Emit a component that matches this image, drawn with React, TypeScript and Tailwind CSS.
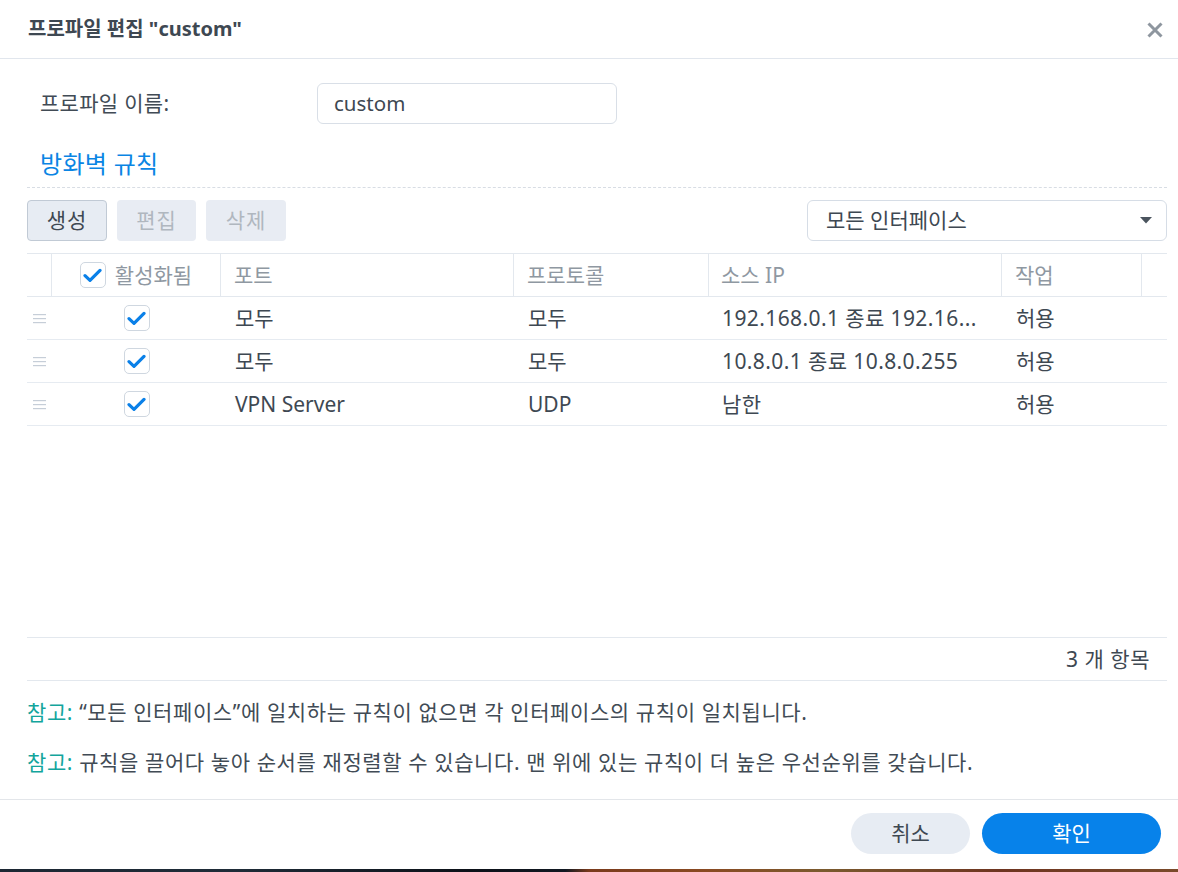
import React from "react";

const font = { fontFamily: '"Noto Sans", "Noto Sans CJK KR", sans-serif' };

function Check() {
  return (
    <div className="w-[26px] h-[26px] rounded-[5px] border border-[#cfd7e0] bg-white flex items-center justify-center shrink-0">
      <svg width="19" height="15" viewBox="0 0 19 15" fill="none">
        <path d="M2 7.6 L7 12.4 L17 2.4" stroke="#0a80e8" strokeWidth="3.2" strokeLinecap="round" strokeLinejoin="round" />
      </svg>
    </div>
  );
}

function Handle() {
  return (
    <svg width="13" height="11" viewBox="0 0 13 11">
      <rect x="0" y="1" width="13" height="1.2" fill="#c6ced8" />
      <rect x="0" y="5" width="13" height="1.2" fill="#c6ced8" />
      <rect x="0" y="9" width="13" height="1.2" fill="#c6ced8" />
    </svg>
  );
}

const rows = [
  { port: "모두", proto: "모두", ip: "192.168.0.1 종료 192.16...", act: "허용" },
  { port: "모두", proto: "모두", ip: "10.8.0.1 종료 10.8.0.255", act: "허용" },
  { port: "VPN Server", proto: "UDP", ip: "남한", act: "허용" },
];

export default function App() {
  return (
    <div className="w-[1178px] h-[872px] flex flex-col bg-white text-[#414b55] overflow-hidden" style={font}>
      <div className="flex-1 flex flex-col min-h-0">
        {/* Header */}
        <div className="h-[59px] shrink-0 border-b border-[#e1e6ed] flex items-center justify-between pl-[28px] pr-[15px]">
          <div className="text-[20px] leading-none font-bold text-[#3e4852]">프로파일 편집 "custom"</div>
          <svg width="16" height="16" viewBox="0 0 16 16" className="mt-[1px]">
            <path d="M1.5 1.5 L14.5 14.5 M14.5 1.5 L1.5 14.5" stroke="#8e969f" strokeWidth="3" strokeLinecap="butt" />
          </svg>
        </div>

        {/* Body */}
        <div className="flex-1 flex flex-col pl-[27px] pr-[11px]">
          <div className="flex items-center mt-[24px] h-[41px]">
            <div className="w-[290px] pl-[13px] text-[21px] leading-none tracking-[0.3px]">프로파일 이름:</div>
            <div className="w-[300px] h-[41px] border border-[#d9dfe7] rounded-[6px] flex items-center px-[16px] text-[20.5px] leading-none text-[#3e4852]">
              custom
            </div>
          </div>

          <div className="mt-[20px] h-[44px] border-b border-dashed border-[#d8dde4] pl-[13px] flex items-start">
            <div className="text-[24px] text-[#0a85e4] leading-[40px] tracking-[0.3px]">방화벽 규칙</div>
          </div>

          <div className="mt-[12px] flex items-center justify-between h-[41px]">
            <div className="flex gap-[10px]">
              <div className="w-[80px] h-[41px] rounded-[4px] border border-[#c1cad5] bg-[#e7ecf3] flex items-center justify-center text-[21px] leading-none tracking-[1px] text-[#3e4852]">생성</div>
              <div className="w-[79px] h-[41px] rounded-[4px] bg-[#e8ecf3] flex items-center justify-center text-[21px] leading-none tracking-[1px] text-[#b0b7bf]">편집</div>
              <div className="w-[80px] h-[41px] rounded-[4px] bg-[#e8ecf3] flex items-center justify-center text-[21px] leading-none tracking-[1px] text-[#b0b7bf]">삭제</div>
            </div>
            <div className="w-[360px] h-[41px] border border-[#d6dde6] rounded-[6px] flex items-center justify-between pl-[18px] pr-[14px] text-[21px] leading-none text-[#3e4852]">
              <span>모든 인터페이스</span>
              <svg width="12" height="7" viewBox="0 0 12 7">
                <path d="M0 0 L12 0 L6 6.5 Z" fill="#4a545e" />
              </svg>
            </div>
          </div>

          {/* Table */}
          <div className="mt-[12px] flex-1 flex flex-col">
            <div className="h-[44px] border-t border-b border-[#e3e8ee] flex text-[21px] leading-none text-[#8f98a2]">
              <div className="w-[25px] border-r border-[#e3e8ee]" />
              <div className="w-[169px] border-r border-[#e3e8ee] flex items-center justify-center gap-[9px]">
                <Check />
                <span>활성화됨</span>
              </div>
              <div className="w-[293px] border-r border-[#e3e8ee] flex items-center pl-[13px]">포트</div>
              <div className="w-[195px] border-r border-[#e3e8ee] flex items-center pl-[13px]">프로토콜</div>
              <div className="w-[293px] border-r border-[#e3e8ee] flex items-center pl-[12px]">소스 IP</div>
              <div className="w-[140px] border-r border-[#e3e8ee] flex items-center pl-[13px]">작업</div>
              <div className="flex-1" />
            </div>
            {rows.map((r, i) => (
              <div key={i} className="h-[43px] border-b border-[#e6ebf1] flex text-[21px] leading-none text-[#3e4852]">
                <div className="w-[25px] flex items-center pl-[6px]">
                  <Handle />
                </div>
                <div className="w-[169px] flex items-center justify-center">
                  <Check />
                </div>
                <div className="w-[293px] flex items-center pl-[14px]">{r.port}</div>
                <div className="w-[195px] flex items-center pl-[14px]">{r.proto}</div>
                <div className="w-[293px] flex items-center pl-[13px] whitespace-nowrap overflow-hidden tracking-[0.4px]">{r.ip}</div>
                <div className="w-[140px] flex items-center pl-[14px]">{r.act}</div>
                <div className="flex-1" />
              </div>
            ))}
            <div className="flex-1" />
            <div className="h-[44px] border-t border-b border-[#e3e8ee] flex items-center justify-end pr-[17px] text-[21px] leading-none tracking-[0.5px] text-[#3e4852]">
              3 개 항목
            </div>
          </div>

          <div className="pt-[18px] pb-[24px] flex flex-col gap-[24px] text-[21px] tracking-[0.6px] text-[#414b55]">
            <div className="leading-[26px] whitespace-nowrap">
              <span className="text-[#13a59c]">참고:</span> “모든 인터페이스”에 일치하는 규칙이 없으면 각 인터페이스의 규칙이 일치됩니다.
            </div>
            <div className="leading-[26px] whitespace-nowrap">
              <span className="text-[#13a59c]">참고:</span> 규칙을 끌어다 놓아 순서를 재정렬할 수 있습니다. 맨 위에 있는 규칙이 더 높은 우선순위를 갖습니다.
            </div>
          </div>
        </div>

        {/* Footer */}
        <div className="h-[70px] shrink-0 border-t border-[#e3e6ea] flex items-start justify-end pt-[13px] pr-[17px] gap-[12px]">
          <div className="w-[119px] h-[41px] rounded-full bg-[#e7ecf3] flex items-center justify-center text-[21px] leading-none text-[#3e4852]">취소</div>
          <div className="w-[179px] h-[41px] rounded-full bg-[#0782ea] flex items-center justify-center text-[21px] leading-none text-white">확인</div>
        </div>
      </div>
      <div className="h-[3px] shrink-0 bg-[linear-gradient(90deg,#1c2733_0%,#1f2c38_20%,#0c1118_40%,#111822_48%,#7a3a1c_50%,#8a4a22_60%,#7a5a2e_70%,#6e3420_85%,#7a4a2a_100%)]" />
    </div>
  );
}
